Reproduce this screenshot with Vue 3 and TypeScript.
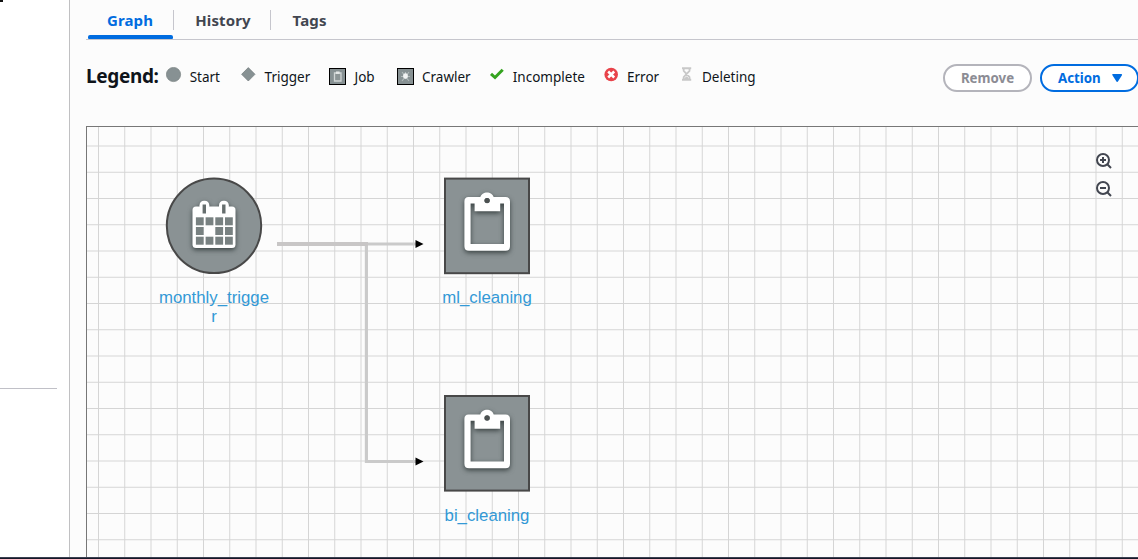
<script setup lang="ts">
interface LegendItem {
  kind: string
  label: string
}

const legend: LegendItem[] = [
  { kind: 'start', label: 'Start' },
  { kind: 'trigger', label: 'Trigger' },
  { kind: 'job', label: 'Job' },
  { kind: 'crawler', label: 'Crawler' },
  { kind: 'done', label: 'Incomplete' },
  { kind: 'error', label: 'Error' },
  { kind: 'deleting', label: 'Deleting' },
]

const jobs = [
  { name: 'ml_cleaning', y: 50.6, labelY: 125.7 },
  { name: 'bi_cleaning', y: 268, labelY: 126 },
]

const step = 26.25
const columns = Array.from({ length: 40 }, (_, i) => 11 + i * step)
const rows = Array.from({ length: 16 }, (_, i) => 18.5 + i * step)
const cells = Array.from({ length: 12 }, (_, i) => ({ x: (i % 4) * 9.7, y: Math.floor(i / 4) * 9.7, on: i !== 5 }))
</script>

<template>
  <div class="page">
    <aside class="side">
      <span class="fragment"></span>
      <div class="rule"></div>
    </aside>
    <main class="main">
      <nav class="tabs">
        <a class="tab active"><span>Graph</span></a>
        <a class="tab history"><span>History</span></a>
        <a class="tab tags"><span>Tags</span></a>
      </nav>
      <div class="toolbar">
        <div class="legend">
          <strong class="title">Legend:</strong>
          <div v-for="item in legend" :key="item.kind" class="item" :class="item.kind">
            <svg class="icon" width="20" height="20" viewBox="0 0 20 20">
              <circle v-if="item.kind === 'start'" cx="7.5" cy="7.5" r="7.1" fill="#879193" stroke="#777f80" stroke-width=".7" />
              <path v-else-if="item.kind === 'trigger'" d="M7.3 .6 14 7.3 7.3 14 .6 7.3Z" fill="#879193" stroke="#737b7c" stroke-width=".7" />
              <g v-else-if="item.kind === 'job'">
                <rect x=".5" y="1.5" width="16" height="16" fill="#879193" stroke="#000" />
                <path d="M5.5 6h6.5v8H5.5Z" fill="#8c9596" stroke="#d0d5d5" stroke-width="1.3" />
                <path d="M7 4.5h3.6v2.4H7Z" fill="#e5e8e8" />
              </g>
              <g v-else-if="item.kind === 'crawler'">
                <rect x=".5" y="1.5" width="16" height="16" fill="#879193" stroke="#000" />
                <path d="m5 5 7 9M12 5 5 14M4 9.5h9M8.5 5v7" stroke="#b4bcbc" stroke-width="1.1" />
                <ellipse cx="8.5" cy="9" rx="2.4" ry="2.7" fill="#f2f3f3" />
              </g>
              <path v-else-if="item.kind === 'done'" d="m2 6.8 4 3.7 7.7-7.8" fill="none" stroke="#34a31f" stroke-width="3" />
              <g v-else-if="item.kind === 'error'">
                <circle cx="8.2" cy="7.5" r="6.8" fill="#e8434a" />
                <path d="m5.2 4.5 6 6m0-6-6 6" stroke="#fff" stroke-width="2.5" />
              </g>
              <g v-else fill="none" stroke="#c8c8c8">
                <path d="M2 1.2h9.2M2 12.8h9.2" stroke-width="2" />
                <path d="M3.7 1v3L9.5 10v3M9.5 1v3L3.7 10v3" stroke-width="1.8" />
                <path d="m4.8 11.5 1.8-1.8 1.8 1.8Z" fill="#c8c8c8" />
              </g>
            </svg>
            <span class="label">{{ item.label }}</span>
          </div>
        </div>
        <div class="buttons">
          <button class="btn disabled">Remove</button>
          <button class="btn action">
            <span>Action</span>
            <svg width="12" height="10" viewBox="0 0 12 10"><path d="M1.2 1.8h8L5.2 8Z" fill="#006ce0" stroke="#006ce0" stroke-width="1.8" stroke-linejoin="round" /></svg>
          </button>
        </div>
      </div>
      <section class="canvas">
        <svg class="graph" width="1051" height="430" viewBox="0 0 1051 430">
          <defs>
            <filter id="shadow" x="-30%" y="-30%" width="160%" height="160%" color-interpolation-filters="sRGB">
              <feDropShadow dx="0" dy="2" stdDeviation="2.4" flood-color="#303838" flood-opacity=".9" />
            </filter>
          </defs>
          <g fill="#d5d5d5">
            <rect v-for="x in columns" :key="'c' + x" :x="x" y="0" width="1" height="430" />
            <rect v-for="y in rows" :key="'r' + y" x="0" :y="y" width="1051" height="1" />
          </g>
          <g fill="none" stroke="#cacaca" stroke-width="3.15">
            <path d="M190 117H332" />
            <path d="M279.4 117V334.5H332" />
            <path d="M190 117H281" stroke="#c8c6c6" stroke-width="3.8" />
          </g>
          <path d="M328.5 113 336.5 117 328.5 121ZM328.5 330.5 336.5 334.5 328.5 338.5Z" />
          <circle cx="127" cy="98.8" r="47.2" fill="#8a9294" stroke="#484848" stroke-width="2" />
          <g transform="translate(105.5 74.5)" filter="url(#shadow)">
            <rect x="0" y="5" width="43" height="41.5" rx="3.5" fill="#fff" />
            <rect x="7" y="-.8" width="9.8" height="15" rx="4.5" fill="#fff" />
            <rect x="26.5" y="-.8" width="9.8" height="15" rx="4.5" fill="#fff" />
            <path d="M11.8 3v9M31.3 3v9" stroke="#666e6e" stroke-width="3.4" />
            <g transform="translate(3.4 15.8)" fill="#788181">
              <template v-for="(c, i) in cells" :key="i">
                <rect v-if="c.on" :x="c.x" :y="c.y" width="7.8" height="8" />
              </template>
            </g>
          </g>
          <g v-for="job in jobs" :key="job.name" :transform="`translate(357 ${job.y})`">
            <rect x="1" y="1" width="84" height="94.6" fill="#8a9294" stroke="#484848" stroke-width="2" />
            <g filter="url(#shadow)">
              <path fill="#fff" fill-rule="evenodd" d="M24.5 19.5H36.3C37 16.7 40 14.8 43 14.8S49 16.7 49.7 19.5H61.5Q66 19.5 66 24V68.7Q66 73.2 61.5 73.2H25Q20.4 73.2 20.4 68.7V24Q20.4 19.5 24.5 19.5ZM26.6 25.8V66.5H60V25.8H56.2V33.7H30.6V25.8ZM45.8 23A2.7 2.7 0 1 0 40.4 23 2.7 2.7 0 1 0 45.8 23Z" />
            </g>
            <circle cx="43.1" cy="23" r="2.5" fill="#4c5151" />
            <text x="43" :y="job.labelY" text-anchor="middle" class="name">{{ job.name }}</text>
          </g>
          <text class="name" text-anchor="middle" x="127" y="176.3">monthly_trigge</text>
          <text class="name" text-anchor="middle" x="127" y="195.2">r</text>
        </svg>
        <div class="zoom-tools">
          <svg v-for="kind in ['in', 'out']" :key="kind" width="17" height="17" viewBox="0 0 17 17" fill="none" stroke="#424650" stroke-width="2">
            <circle cx="7" cy="7" r="6" />
            <path d="m11.3 11.3 3.7 3.7M4 7h6" />
            <path v-if="kind === 'in'" d="M7 4v6" />
          </svg>
        </div>
      </section>
    </main>
    <footer class="bottom"></footer>
  </div>
</template>

<style>
body { margin: 0; overflow: hidden; }
</style>

<style scoped>
.page { width: 1138px; height: 559px; display: grid; grid-template: 557px 2px / 70px 1068px; overflow: hidden; background: #fcfcfc; font-family: "Noto Sans", sans-serif; }
.side { box-sizing: border-box; border-right: 1px solid #c0c0c2; background: #fff; }
.fragment { display: block; width: 3px; height: 2px; background: #111; }
.rule { width: 57px; height: 1px; margin-top: 386px; background: #c0c0c7; }
.main { padding-left: 16px; min-width: 0; overflow: hidden; }
.tabs { display: flex; height: 39px; border-bottom: 1px solid #c6c6cd; color: #424650; font-size: 15px; letter-spacing: .12px; font-weight: 700; }
.tab { position: relative; box-sizing: border-box; height: 39px; line-height: 21px; padding-top: 10px; white-space: nowrap; }
.tab.active { width: 88px; padding-left: 21px; color: #006ce0; }
.tab.active::before { content: ""; position: absolute; left: 2px; top: 35px; width: 85px; height: 4px; border-radius: 2px 2px 1px 1px; background: #006ce0; }
.history { width: 97px; padding-left: 21.2px; }
.tags { padding-left: 21.5px; letter-spacing: .2px; }
.tab.active::after, .history::after { content: ""; position: absolute; right: 0; top: 10px; width: 1px; height: 20px; background: #c6c6cd; }
.toolbar { height: 86px; display: flex; }
.legend { display: flex; flex: none; width: 857px; color: #0f141a; }
.title { width: 80px; height: 30px; padding-top: 23px; font-size: 19px; letter-spacing: -.35px; line-height: 27px; white-space: nowrap; }
.item { display: flex; font-size: 13.5px; line-height: 20px; white-space: nowrap; }
.icon { flex: none; margin-top: 27px; width: 20px; height: 20px; }
.label { padding-top: 27px; }
.start { width: 75px; }
.start .label { margin-left: 3.7px; }
.trigger { width: 88px; }
.trigger .label { margin-left: 3.6px; }
.job { width: 68px; }
.job .label { margin-left: 5.5px; }
.crawler { width: 92px; }
.crawler .label { margin-left: 5px; }
.done { width: 114px; }
.done .label { margin-left: 3.8px; }
.error { width: 77px; }
.error .label { margin-left: 4px; }
.deleting .label { margin-left: 2px; }
.buttons { display: flex; gap: 8px; padding-top: 24px; }
.btn { box-sizing: border-box; flex: none; height: 28px; border: 2px solid #b4b4bb; border-radius: 14px; background: #fff; color: #8c8c94; padding: 0; font: 700 13.3px/24px "Noto Sans", sans-serif; white-space: nowrap; }
.disabled { width: 89px; }
.action { display: flex; align-items: center; width: 99px; padding-left: 16px; gap: 11px; color: #006ce0; border-color: #006ce0; }
.canvas { position: relative; border: 1px solid #777; border-right: 0; border-bottom: 0; height: 430px; }
.graph { display: block; }
.name { font: 16.8px "Liberation Sans", Arial, sans-serif; fill: #3399d6; }
.zoom-tools { position: absolute; left: 1009px; top: 26px; display: grid; gap: 11px; }
.bottom { grid-column: 1 / 3; background: linear-gradient(#3b3f50 50%, #151828 50%); }
</style>
